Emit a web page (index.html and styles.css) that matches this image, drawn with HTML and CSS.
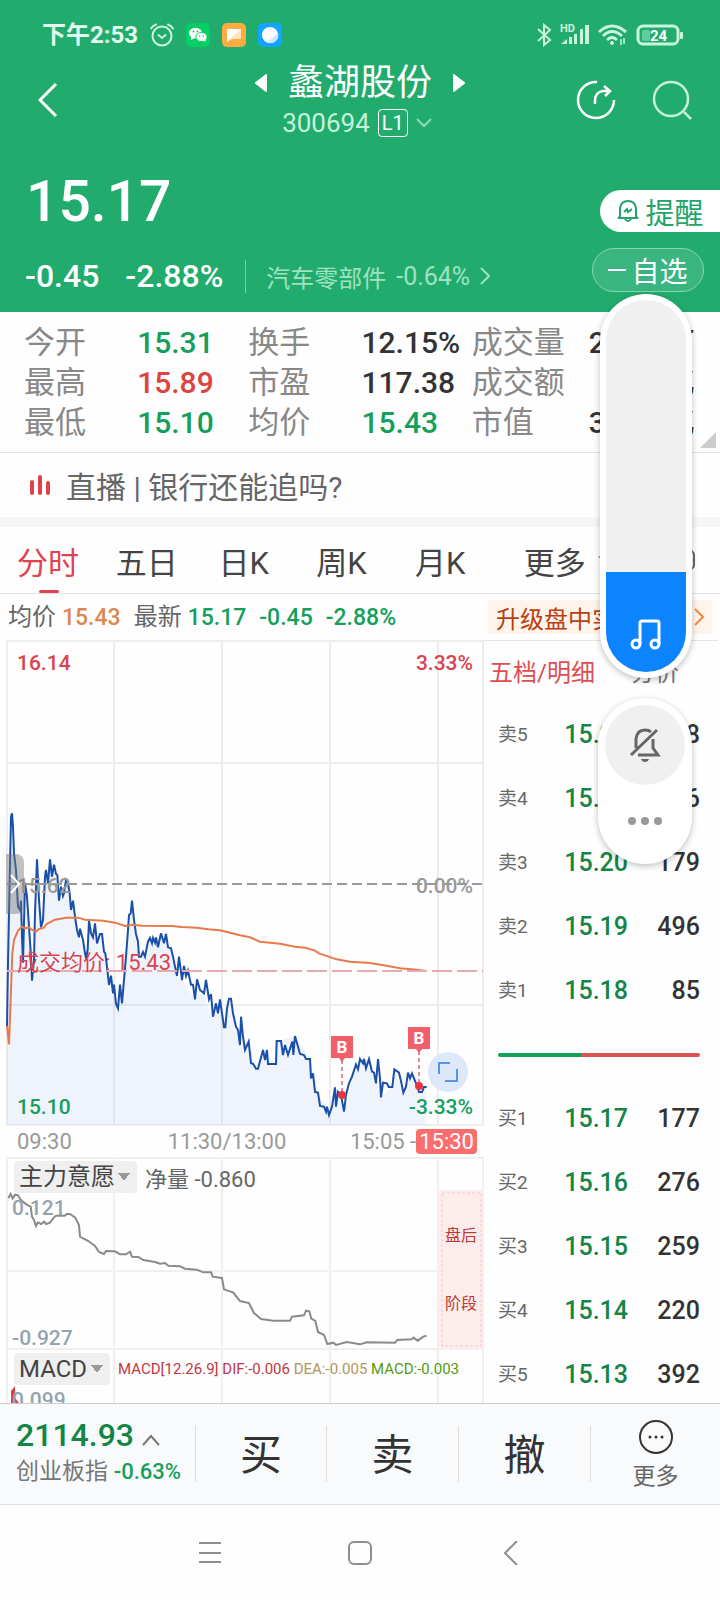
FILE: index.html
```html
<!DOCTYPE html>
<html lang="zh-CN">
<head>
    <meta charset="UTF-8">
    <meta name="viewport" content="width=device-width, initial-scale=1.0">
    <title>蠡湖股份 300694</title>
    <link rel="stylesheet" href="styles.css">
</head>
<body>
    <header class="top">
        <div class="status-bar">
            <span class="clock">下午2:53</span>
            <svg width="24" height="24" viewBox="0 0 24 24" fill="none" stroke="#c9f5dc" stroke-width="2" stroke-linecap="round">
                <circle cx="12" cy="13" r="9.500"/><path d="M8.500 12l3.500 3 3.500-3M1 5.500Q3 2.500 6 1.500M23 5.500Q21 2.500 18 1.500"/>
            </svg>
            <svg width="24" height="24" viewBox="0 0 24 24">
                <rect width="24" height="24" rx="5" fill="#04cf64"/>
                <ellipse cx="9.500" cy="10" rx="6.500" ry="5.300" fill="#fff"/><path d="M5 13v4l4-2z" fill="#fff"/>
                <ellipse cx="15.500" cy="14" rx="5.600" ry="4.600" fill="#fff" stroke="#04cf64"/><path d="M17 17l2.500 2v-3z" fill="#fff"/>
                <g fill="#04cf64"><circle cx="7.500" cy="8.500" r=".9"/><circle cx="11.500" cy="8.500" r=".9"/><circle cx="13.700" cy="13" r=".8"/><circle cx="17.300" cy="13" r=".8"/></g>
            </svg>
            <svg width="24" height="24" viewBox="0 0 24 24">
                <rect width="24" height="24" rx="5" fill="#ffab40"/>
                <path d="M5 6h14v10h-9l-5 3z" fill="#ffe3bd"/><path d="M5 6h14L5 19z" fill="#fff"/>
            </svg>
            <svg width="24" height="24" viewBox="0 0 24 24">
                <rect width="24" height="24" rx="5" fill="#13a5ff"/>
                <circle cx="12" cy="12" r="8" fill="#fff"/><path d="M20 10A8 8 0 0 1 9 19.500z" fill="#cde6ff"/>
            </svg>
            <div class="signals">
                <svg width="16" height="24" viewBox="0 0 16 24" fill="none" stroke="#c9f5dc" stroke-width="2"><path d="M2 6l12 11-6 5V2l6 5L2 18"/></svg>
                <svg width="30" height="24" viewBox="0 0 30 24" fill="#c9f5dc">
                    <text x="0" y="9" class="hd">HD</text>
                    <path d="M1 21l6-5v5zM9 14h3v7H9zM14 11h3v10h-3zM20 6h3v15h-3zM25 2h4v19h-4z"/>
                </svg>
                <svg width="30" height="24" viewBox="0 0 30 24" fill="none" stroke="#c9f5dc" stroke-width="3">
                    <path d="M1 9Q14-3 28 9M5 13Q14 4 24 13M9 17Q14 12 19 17"/><circle cx="14" cy="20" r="1.500" fill="#c9f5dc" stroke-width="1"/>
                    <path d="M23 16v6M26 15v6" stroke-width="1.500"/>
                </svg>
                <svg width="48" height="24" viewBox="0 0 48 24">
                    <rect x="2" y="3" width="40" height="18" rx="5" fill="none" stroke="#c9f5dc" stroke-width="3"/>
                    <rect x="6" y="7" width="8" height="11" rx="2" fill="#62cd97"/><rect x="44" y="9" width="3" height="7" rx="1" fill="#c9f5dc"/>
                    <text x="14" y="18" class="charge">24</text>
                </svg>
            </div>
        </div>

        <div class="nav">
            <button class="icon-btn" aria-label="返回">
                <svg width="20" height="34" viewBox="0 0 20 34" fill="none" stroke="#fff" stroke-width="3"><path d="M18 1L2 17l16 16"/></svg>
            </button>
            <div class="title">
                <div class="title-row">
                    <button class="icon-btn" aria-label="上一只"><svg width="12" height="18" viewBox="0 0 12 18"><path d="M11 0q1 0 1 1v16q0 1-1 1L0 9.500v-1z" fill="#fff"/></svg></button>
                    <h1>蠡湖股份</h1>
                    <button class="icon-btn" aria-label="下一只"><svg width="12" height="18" viewBox="0 0 12 18"><path d="M1 0Q0 0 0 1v16q0 1 1 1l11-8.500v-1z" fill="#fff"/></svg></button>
                </div>
                <div class="code-row">
                    <span>300694</span><span class="level">L1</span>
                    <svg width="16" height="10" viewBox="0 0 16 10" fill="none" stroke="#8cdcb3" stroke-width="2"><path d="M1 1l7 7 7-7"/></svg>
                </div>
            </div>
            <div class="nav-actions">
                <button class="icon-btn" aria-label="分享">
                    <svg width="40" height="40" viewBox="0 0 40 40" fill="none" stroke="#fff" stroke-width="2.500"><path d="M21 2A18 18 0 1 0 38 20M19 24v-3q0-9 8-10h7M28 6l6 5-5 5"/></svg>
                </button>
                <button class="icon-btn" aria-label="搜索">
                    <svg width="40" height="40" viewBox="0 0 40 40" fill="none" stroke="#c5f2da" stroke-width="2.500"><circle cx="19" cy="19" r="17"/><path d="M32 32l7 7"/></svg>
                </button>
            </div>
        </div>

        <div class="quote">
            <div>
                <div class="price">15.17</div>
                <div class="change">
                    <span>-0.45</span><span>-2.88%</span>
                    <a class="sector" href="#">汽车零部件 <span class="sector-pct">-0.64%</span>
                        <svg width="10" height="18" viewBox="0 0 10 18" fill="none" stroke="#a0e2c0" stroke-width="2"><path d="M1 1l8 8-8 8"/></svg>
                    </a>
                </div>
            </div>
            <div class="quote-actions">
                <button class="alert-btn">
                    <svg width="24" height="24" viewBox="0 0 24 24" fill="none" stroke="#21a56a" stroke-width="2"><path d="M4 18V9q1-7 8-7t8 7v9l2 1H2zM8 13l3-3 1 3 4-3M9 20q3 4 6 0"/></svg>提醒
                </button>
                <button class="watch-btn">
                    <svg width="18" height="4" viewBox="0 0 18 4"><path d="M0 2h18" stroke="#fff" stroke-width="2"/></svg>自选
                </button>
            </div>
        </div>
    </header>

    <dl class="stats">
        <dt>今开</dt><dd class="down">15.31</dd>
        <dt>换手</dt><dd>12.15%</dd>
        <dt>成交量</dt><dd class="wide"><span>2</span><span>万</span></dd>
        <dt>最高</dt><dd class="up">15.89</dd>
        <dt>市盈</dt><dd>117.38</dd>
        <dt>成交额</dt><dd class="wide"><span></span><span>亿</span></dd>
        <dt>最低</dt><dd class="down">15.10</dd>
        <dt>均价</dt><dd class="down">15.43</dd>
        <dt>市值</dt><dd class="wide"><span>3</span><span>亿</span></dd>
    </dl>

    <a class="live" href="#">
        <svg width="22" height="20" viewBox="0 0 22 20" fill="#e2414b"><rect x="0" y="5" width="4" height="15" rx="2"/><rect x="8" y="0" width="4" height="20" rx="2"/><rect x="16" y="6" width="4" height="14" rx="2"/></svg>
        直播 | 银行还能追吗?
    </a>

    <nav class="tabs">
        <button class="active">分时</button>
        <button>五日</button>
        <button>日K</button>
        <button>周K</button>
        <button>月K</button>
        <button>更多<svg width="12" height="8" viewBox="0 0 12 8"><path d="M0 0h12L6 8z" fill="#999"/></svg></button>
        <button class="settings" aria-label="设置"><svg width="20" height="20" viewBox="0 0 20 20"><rect x="1" y="1" width="18" height="18" rx="4" fill="none" stroke="#666" stroke-width="2"/></svg></button>
    </nav>

    <div class="summary">
        <div class="summary-values">
            <span>均价 <b class="avg">15.43</b></span>
            <span>最新 <b class="down">15.17</b></span>
            <b class="down">-0.45</b>
            <b class="down">-2.88%</b>
        </div>
        <a class="upgrade" href="#"><span>升级盘中实</span>
            <svg width="10" height="18" viewBox="0 0 10 18" fill="none" stroke="#f08a3c" stroke-width="2"><path d="M1 1l8 8-8 8"/></svg>
        </a>
    </div>

    <main class="market">
        <section class="charts">
            <div class="chart">
                <svg class="plot" viewBox="0 0 484 486">
                    <!-- grid -->
                    <g stroke="#ededee" stroke-width="2" fill="none">
                        <rect x="7" y="1" width="476" height="484"/>
                        <path d="M114 1v484M222 1v484M330 1v484M438 1v484M7 123h476M7 365h476"/>
                    </g>
                    <svg width="484" height="486" viewBox="0 30 1452 1458">
                        <path fill="#3f7ee8" fill-opacity=".08" d="M21 1485V1188L27 850 33 560 36 550 39 590 48 720 54 830 60 840 63 812 69 998 75 758 81 800 87 890 96 1052 102 990 111 688 123 892 129 870 138 720 144 760 150 688 172 735 177 812 198 750 209 790 231 900 258 985 267 872 291 940 306 912 327 1065 354 1135 378 980 396 812 417 980 435 980 450 924 498 912 531 1038 546 1050 585 1108 600 1080 639 1160 660 1108 676 1192 687 1106 720 1245 746 1235 768 1316 789 1260 828 1302 830 1233 885 1218 930 1287 954 1388 987 1455 1005 1372 1032 1445 1068 1303 1107 1287 1143 1402 1177 1371 1183 1318 1210 1388 1236 1330 1278 1371V1485z"/>
                        <polyline class="line price-line" points="21,1188 24,1000 27,850 33,560 36,550 39,590 42,670 48,720 54,830 60,840 63,812 66,920 69,998 75,758 81,800 87,890 93,980 96,1052 102,990 105,850 111,688 117,810 123,892 129,870 135,740 138,720 144,760 150,688 156,740 162,704 168,732 172,735 177,812 183,770 189,798 192,790 198,750 204,760 209,790 213,840 219,812 225,860 231,900 237,922 240,896 249,930 255,970 258,985 263,960 267,872 273,910 279,922 285,880 291,940 300,912 306,912 312,965 316,970 321,1010 327,1065 333,1037 339,1090 342,1064 348,1122 354,1135 360,1064 366,1120 372,1050 378,980 384,900 387,855 392,850 396,812 402,870 408,912 414,935 417,980 423,980 429,966 435,980 444,935 450,924 456,940 459,924 465,938 468,922 474,952 483,910 492,940 498,912 504,952 513,955 519,980 525,1010 531,1038 537,980 546,1050 552,1008 558,1038 564,1022 573,1064 579,1064 585,1108 591,1048 600,1080 612,1090 618,1050 627,1108 633,1092 639,1160 648,1120 654,1150 660,1108 666,1150 672,1192 676,1192 681,1135 687,1106 693,1106 699,1150 708,1190 714,1200 720,1245 723,1160 729,1220 735,1260 746,1235 753,1300 760,1302 768,1316 774,1316 789,1260 795,1290 801,1260 804,1302 828,1302 830,1233 843,1233 849,1275 855,1245 864,1275 877,1235 880,1275 885,1218 900,1272 912,1275 918,1287 930,1287 933,1345 939,1330 945,1386 954,1388 960,1428 972,1430 978,1445 981,1430 987,1455 996,1430 1005,1372 1008,1430 1014,1385 1023,1395 1032,1445 1038,1395 1047,1360 1056,1340 1068,1303 1074,1318 1080,1287 1089,1300 1092,1287 1098,1315 1107,1287 1116,1325 1122,1328 1128,1360 1134,1287 1140,1345 1143,1402 1149,1358 1161,1360 1166,1371 1177,1371 1183,1318 1197,1328 1204,1358 1210,1388 1218,1370 1224,1328 1230,1345 1236,1330 1242,1345 1250,1365 1257,1386 1266,1386 1272,1371 1280,1371"/>
                        <polyline class="line avg-line" points="21,1188 27,1243 33,1080 37,970 42,930 54,902 66,890 75,895 87,892 96,900 108,905 117,897 132,893 140,882 165,869 198,863 235,863 255,869 310,872 345,878 375,888 400,884 425,887 515,888 545,891 590,893 625,898 660,901 690,908 720,916 750,922 780,935 840,941 885,950 915,953 945,962 957,970 1010,988 1050,995 1110,999 1160,1007 1200,1015 1250,1019 1278,1023"/>
                    </svg>
                    <path d="M7 244h476" stroke="#999" stroke-width="2" stroke-dasharray="10 5"/>
                    <path d="M7 331h476" stroke="#e8aab0" stroke-width="2" stroke-dasharray="20 5"/>
                    <g class="axis-text">
                        <text x="17" y="30" fill="#d9434e">16.14</text>
                        <text x="473" y="30" fill="#d9434e" text-anchor="end">3.33%</text>
                        <text x="17" y="253" fill="#999">15.62</text>
                        <text x="473" y="253" fill="#999" text-anchor="end">0.00%</text>
                        <text x="17" y="330" fill="#d9434e" class="regular">成交均价: 15.43</text>
                        <text x="17" y="474" fill="#159f5c">15.10</text>
                        <text x="473" y="474" fill="#159f5c" text-anchor="end">-3.33%</text>
                    </g>
                    <!-- buy markers -->
                    <g>
                        <path d="M342 420v32M419 411v32" stroke="#dd8b96" stroke-width="2" stroke-dasharray="4 3"/>
                        <path d="M331 396h22v22h-8l-3 4-3-4h-8zM408 387h22v22h-8l-3 4-3-4h-8z" fill="#f15f6b"/>
                        <circle cx="342" cy="455" r="4" fill="#e8363f"/><circle cx="419" cy="446" r="4" fill="#e8363f"/>
                        <text class="mark" x="342" y="413">B</text><text class="mark" x="419" y="404">B</text>
                    </g>
                </svg>
                <button class="drawer" aria-label="展开"><svg width="10" height="20" viewBox="0 0 10 20" fill="none" stroke="#fff" stroke-width="2"><path d="M1 1l8 9-8 9"/></svg></button>
                <button class="expand" aria-label="全屏"><svg width="20" height="20" viewBox="0 0 20 20" fill="none" stroke="#5b93e0" stroke-width="2"><path d="M1 12V1h11M19 7v12H7"/></svg></button>
            </div>

            <div class="times">
                <span>09:30</span>
                <span>11:30/13:00</span>
                <span>15:05 -<mark>15:30</mark></span>
            </div>

            <div class="indicators">
                <svg class="plot" viewBox="0 0 484 246">
                    <path d="M6 1h478M7 0v246M114 0v246M222 0v246M330 0v246M438 0v246M483 0v246M6 114h432M6 192h478" stroke="#f0f0f1" stroke-width="2"/>
                    <rect x="438" y="33" width="46" height="159" fill="#fdecec"/>
                    <rect x="442" y="36" width="39" height="153" fill="none" stroke="#f6c9c9" stroke-dasharray="3 2"/>
                    <text class="phase" x="461" y="84">盘后</text><text class="phase" x="461" y="152">阶段</text>
                    <svg width="484" height="246" viewBox="0 111 1452 738">
                        <polyline class="line flow-line" points="25,235 32,222 38,235 45,224 54,226 60,237 72,248 84,256 92,260 96,290 102,300 108,318 114,307 123,312 132,305 138,312 150,308 162,292 168,287 194,287 200,282 210,282 226,293 237,316 240,350 265,363 285,378 297,396 312,402 318,393 345,394 360,403 378,403 390,395 396,410 415,411 430,420 465,426 480,431 495,429 505,437 540,439 555,446 590,449 610,457 633,457 638,470 666,474 672,508 700,518 720,543 747,549 762,579 783,597 820,602 870,602 876,590 912,586 918,572 928,574 934,596 946,603 954,636 972,645 982,672 1000,668 1008,675 1040,666 1080,673 1100,667 1185,668 1192,660 1235,658 1240,653 1253,662 1270,650 1280,647"/>
                    </svg>
                    <path d="M11 246v-12l4-5v12l4 5z" fill="#d9434e"/>
                    <g class="axis-text" fill="#93a4b1">
                        <text x="12" y="58">0.121</text>
                        <text x="12" y="188">-0.927</text>
                        <text x="12" y="250">0.099</text>
                    </g>
                </svg>
                <div class="indicator-head flow">
                    <select aria-label="指标一"><option>主力意愿</option></select>
                    <span>净量 <b>-0.860</b></span>
                </div>
                <div class="indicator-head macd">
                    <select aria-label="指标二"><option>MACD</option></select>
                    <p><span class="m1">MACD[12.26.9]</span> <span class="m1">DIF:-0.006</span> <span class="m2">DEA:-0.005</span> <span class="m3">MACD:-0.003</span></p>
                </div>
            </div>
        </section>

        <section class="book">
            <div class="book-tabs">
                <button class="active">五档/明细</button>
                <button>分价</button>
            </div>
            <table>
                <tbody>
                    <tr><th scope="row">卖5</th><td class="p">15.22</td><td>8</td></tr>
                    <tr><th scope="row">卖4</th><td class="p">15.21</td><td>6</td></tr>
                    <tr><th scope="row">卖3</th><td class="p">15.20</td><td>179</td></tr>
                    <tr><th scope="row">卖2</th><td class="p">15.19</td><td>496</td></tr>
                    <tr><th scope="row">卖1</th><td class="p">15.18</td><td>85</td></tr>
                    <tr><td colspan="3"><div class="ratio"></div></td></tr>
                    <tr><th scope="row">买1</th><td class="p">15.17</td><td>177</td></tr>
                    <tr><th scope="row">买2</th><td class="p">15.16</td><td>276</td></tr>
                    <tr><th scope="row">买3</th><td class="p">15.15</td><td>259</td></tr>
                    <tr><th scope="row">买4</th><td class="p">15.14</td><td>220</td></tr>
                    <tr><th scope="row">买5</th><td class="p">15.13</td><td>392</td></tr>
                </tbody>
            </table>
        </section>
    </main>

    <footer class="trade-bar">
        <a class="index" href="#">
            <span class="index-value">2114.93 <svg width="18" height="12" viewBox="0 0 18 12" fill="none" stroke="#777" stroke-width="2"><path d="M1 11l8-9 8 9"/></svg></span>
            <span class="index-name">创业板指 <b>-0.63%</b></span>
        </a>
        <button>买</button>
        <button>卖</button>
        <button>撤</button>
        <button class="more">
            <svg width="36" height="36" viewBox="0 0 36 36"><circle cx="18" cy="18" r="16" fill="none" stroke="#333" stroke-width="2"/><g fill="#333"><circle cx="12" cy="18" r="1.500"/><circle cx="18" cy="18" r="1.500"/><circle cx="24" cy="18" r="1.500"/></g></svg>
            更多
        </button>
    </footer>

    <div class="system-nav">
        <button class="icon-btn" aria-label="菜单"><svg width="24" height="24" viewBox="0 0 24 24" stroke="#8f8f8f" stroke-width="2"><path d="M1 2h22M1 12h22M1 21h22"/></svg></button>
        <button class="icon-btn" aria-label="主页"><svg width="24" height="24" viewBox="0 0 24 24"><rect x="1" y="1" width="22" height="22" rx="5" fill="none" stroke="#8f8f8f" stroke-width="2"/></svg></button>
        <button class="icon-btn" aria-label="后退"><svg width="24" height="24" viewBox="0 0 24 24" fill="none" stroke="#8f8f8f" stroke-width="2"><path d="M19 0L7 12l12 12"/></svg></button>
    </div>

    <!-- system volume overlay -->
    <div class="volume">
        <div class="volume-track">
            <input type="range" min="0" max="100" value="27" aria-label="音量">
            <svg width="32" height="32" viewBox="0 0 32 32" fill="none" stroke="#fff" stroke-width="3"><circle cx="6" cy="26" r="4"/><circle cx="25" cy="26" r="4"/><path d="M10 26V5q0-2 2-2h15q2 0 2 2v21"/></svg>
        </div>
        <div class="volume-menu">
            <button class="mute" aria-label="静音">
                <svg width="32" height="36" viewBox="0 0 32 36" fill="none" stroke="#666" stroke-width="3"><path d="M7 21V12Q8 3 16 3q4 0 6 2M24 12v9l5 7H9M2 28L28 3"/><path d="M12 32h8q-1 3-4 3t-4-3z" fill="#666" stroke="none"/></svg>
            </button>
            <button class="icon-btn" aria-label="更多音量选项"><svg width="34" height="8" viewBox="0 0 34 8" fill="#999"><circle cx="4" cy="4" r="4"/><circle cx="17" cy="4" r="4"/><circle cx="30" cy="4" r="4"/></svg></button>
        </div>
    </div>
</body>
</html>
```

FILE: styles.css
```css
* {
    box-sizing: border-box;
}

body {
    margin: 0;
    position: relative;
    display: flex;
    flex-direction: column;
    min-height: 100vh;
    font-family: Roboto, "Noto Sans CJK SC", sans-serif;
    background: #fefefe;
    color: #333;
    white-space: nowrap;
}

button,
select {
    font: inherit;
    color: inherit;
    background: none;
    border: none;
    padding: 0;
    cursor: pointer;
}

a {
    color: inherit;
    text-decoration: none;
}

b {
    font-weight: 500;
}

svg {
    flex: none;
}

.icon-btn {
    display: flex;
}

.up {
    color: #dd4340;
}

.down {
    color: #159f5c;
}

/* Green header */
.top {
    background: #21ac6e;
    color: #fff;
}

.status-bar {
    display: flex;
    align-items: center;
    gap: 12px;
    height: 62px;
    padding: 8px 36px 0 42px;
}

.clock {
    font-size: 24px;
    line-height: 28px;
    font-weight: 700;
    color: #e2fbee;
}

.signals {
    display: flex;
    gap: 8px;
    margin-left: auto;
}

.hd {
    font-size: 11px;
    font-weight: 700;
}

.charge {
    font-size: 15px;
    font-weight: 700;
    fill: #fff;
}

.nav {
    display: grid;
    grid-template-columns: 1fr auto 1fr;
    align-items: center;
    height: 78px;
    padding: 0 28px;
}

.nav > .icon-btn {
    padding: 0 0 4px 10px;
}

.title-row,
.code-row {
    display: flex;
    align-items: center;
    justify-content: center;
}

.title-row {
    gap: 21px;
    height: 42px;
}

h1 {
    margin: 0;
    font-size: 36px;
    line-height: 42px;
    font-weight: 400;
}

.code-row {
    gap: 8px;
    height: 38px;
    padding-right: 6px;
    font-size: 26px;
    color: #c5f2da;
}

.level {
    border: 1px solid #fff;
    border-radius: 4px;
    padding: 0 3px;
    font-size: 20px;
    line-height: 26px;
    color: #fff;
}

.nav-actions {
    display: flex;
    justify-content: flex-end;
    gap: 36px;
    padding-bottom: 4px;
}

.quote {
    display: flex;
    justify-content: space-between;
    height: 172px;
}

.price {
    padding: 26px 0 0 26px;
    font-size: 57px;
    line-height: 72px;
    font-weight: 500;
}

.change {
    display: flex;
    align-items: center;
    gap: 26px;
    height: 34px;
    margin-top: 21px;
    padding-left: 25px;
    font-size: 32px;
    font-weight: 500;
}

.sector {
    display: flex;
    align-items: center;
    gap: 10px;
    height: 33px;
    margin-left: -4px;
    padding-left: 20px;
    border-left: 1px solid #7acda6;
    font-size: 24px;
    font-weight: 400;
    color: #a0e2c0;
}

.sector-pct {
    font-size: 25px;
}

.quote-actions {
    display: flex;
    flex-direction: column;
    align-items: flex-end;
    gap: 16px;
    padding-top: 50px;
}

.alert-btn,
.watch-btn {
    display: flex;
    align-items: center;
    justify-content: center;
    font-size: 29px;
}

.alert-btn {
    gap: 5px;
    width: 120px;
    height: 42px;
    border-radius: 21px 0 0 21px;
    background: #fff;
    color: #21a56a;
}

.watch-btn {
    gap: 5px;
    width: 112px;
    height: 44px;
    margin-right: 16px;
    border: 1px solid #8ad5b0;
    border-radius: 22px;
    background: #39b57f;
    font-size: 28px;
}

/* Key figures */
.stats {
    position: relative;
    display: grid;
    grid-template-columns: 113fr 111fr 113fr 110fr 117fr 106fr;
    margin: 0;
    padding: 11px 25px 9px 24px;
    border-bottom: 1px solid #e4e4e4;
    font-size: 31px;
    line-height: 40px;
}

.stats::after {
    content: "";
    position: absolute;
    right: 4px;
    bottom: 4px;
    border: 8px solid #ccc;
    border-top-color: transparent;
    border-left-color: transparent;
}

.stats dt {
    color: #888;
}

.stats dd {
    margin: 0;
    font-size: 30px;
    font-weight: 500;
}

.stats .wide {
    display: flex;
    justify-content: space-between;
}

.live {
    display: flex;
    align-items: center;
    gap: 14px;
    height: 74px;
    padding-left: 30px;
    border-bottom: 10px solid #f6f6f7;
    font-size: 30px;
    color: #666;
}

.tabs {
    display: grid;
    grid-template-columns: 98fr 102fr 97fr 98fr 108fr 120fr 50fr;
    height: 67px;
    padding: 0 25px 0 17px;
    border-bottom: 1px solid #e4e4e4;
    font-size: 31px;
    color: #444;
}

.tabs button {
    display: flex;
    align-items: center;
    gap: 12px;
    position: relative;
}

.tabs .active {
    color: #e0434d;
}

.tabs .active::after {
    content: "";
    position: absolute;
    left: 22px;
    bottom: 0;
    width: 20px;
    height: 3px;
    border-radius: 2px;
    background: #e0434d;
}

.tabs .settings {
    justify-content: flex-end;
}

/* Latest quote line */
.summary {
    display: grid;
    grid-template-columns: 488fr 232fr;
    align-items: center;
    height: 46px;
    font-size: 24px;
    color: #666;
}

.summary-values {
    display: flex;
    align-items: baseline;
    gap: 13px;
    padding-left: 8px;
    line-height: 34px;
}

.summary-values b {
    font-size: 23px;
}

.avg {
    color: #db8753;
}

.upgrade {
    display: flex;
    align-items: center;
    justify-content: space-between;
    height: 34px;
    margin-right: 8px;
    padding: 0 8px;
    border-radius: 4px;
    background: #fff4ec;
    color: #b8400f;
}

/* Charts and order book */
.market {
    display: grid;
    grid-template-columns: 484fr 236fr;
}

.chart,
.indicators {
    position: relative;
}

.plot {
    display: block;
    width: 100%;
    overflow: hidden;
}

.line {
    fill: none;
    stroke-width: 2;
    vector-effect: non-scaling-stroke;
}

.price-line {
    stroke: #1b50a8;
}

.avg-line {
    stroke: #e8794a;
}

.flow-line {
    stroke: #8a8a8a;
}

.axis-text {
    font-size: 21px;
    font-weight: 500;
}

.regular {
    font-size: 22px;
    font-weight: 400;
}

.mark {
    font-size: 17px;
    font-weight: 700;
    fill: #fff;
    text-anchor: middle;
}

.phase {
    font-size: 16px;
    fill: #c0392f;
    text-anchor: middle;
}

.drawer,
.expand {
    position: absolute;
    display: flex;
    align-items: center;
    justify-content: center;
}

.drawer {
    left: 6px;
    top: 44%;
    width: 18px;
    height: 60px;
    border-radius: 0 8px 8px 0;
    background: rgba(120, 120, 120, 0.45);
}

.expand {
    right: 16px;
    bottom: 34px;
    width: 40px;
    height: 40px;
    border-radius: 50%;
    background: #dde8fb;
}

.times {
    display: grid;
    grid-template-columns: 1fr auto 1fr;
    align-items: center;
    height: 31px;
    padding: 0 7px 0 17px;
    font-size: 22px;
    color: #999;
}

.times :last-child {
    justify-self: end;
}

.times span:nth-child(2) {
    padding-right: 40px;
}

.times mark {
    padding: 0 3px;
    border-radius: 4px;
    background: #fc6d6d;
    color: #fff;
}

.indicator-head {
    position: absolute;
    left: 14px;
    display: flex;
    align-items: center;
    gap: 8px;
    height: 32px;
    font-size: 22px;
    color: #666;
}

.indicator-head b {
    font-weight: 400;
}

.flow {
    top: 4px;
}

.macd {
    top: 196px;
}

.indicator-head select {
    appearance: none;
    height: 32px;
    padding: 0 22px 0 5px;
    border-radius: 4px;
    background: conic-gradient(from -37deg at 50% 100%, #999 74deg, transparent 0) no-repeat right 7px center / 12px 8px #efefef;
    font-size: 24px;
    color: #444;
}

.indicator-head p {
    margin: 0;
    font-size: 15px;
}

.m1 {
    color: #c0383f;
}

.m2 {
    color: #b3945e;
}

.m3 {
    color: #549a12;
}

.book {
    margin-bottom: -4px;
}

.book-tabs {
    display: flex;
    align-items: center;
    gap: 36px;
    height: 63px;
    margin-right: 2px;
    padding: 0 0 3px 5px;
    border-top: 1px solid #e4e4e4;
    font-size: 24px;
    color: #777;
}

.book-tabs .active {
    color: #de4d52;
}

.book table {
    width: 100%;
    border-collapse: collapse;
    table-layout: fixed;
}

.book tr {
    height: 64px;
}

.book th {
    width: 34%;
    padding: 0 0 0 14px;
    text-align: left;
    font-size: 19px;
    line-height: 24px;
    font-weight: 400;
    color: #666;
}

.book td {
    padding: 0 20px 0 0;
    text-align: right;
    font-size: 25px;
    line-height: 30px;
    font-weight: 500;
}

.book .p {
    padding: 0;
    text-align: left;
    color: #138544;
}

.ratio {
    height: 4px;
    margin-left: 14px;
    border-radius: 2px;
    background: linear-gradient(to right, #159f5c 41%, #dd5353 41%);
}

/* Bottom trading bar */
.trade-bar {
    position: relative;
    display: grid;
    grid-template-columns: 195fr 131fr 132fr 132fr 130fr;
    align-items: center;
    height: 102px;
    border-top: 1px solid #ccc;
    border-bottom: 1px solid #e2e2e2;
    background: #f9fafc;
}

.trade-bar button {
    height: 56px;
    padding-top: 2px;
    border-left: 1px solid #ddd;
    font-size: 42px;
    line-height: 56px;
}

.index {
    display: flex;
    flex-direction: column;
    padding-left: 16px;
}

.index-value {
    font-size: 32px;
    line-height: 36px;
    font-weight: 500;
    color: #138544;
}

.index-name {
    font-size: 23px;
    line-height: 38px;
    color: #777;
}

.index-name b {
    font-size: 22px;
    color: #159f5c;
}

.trade-bar .more {
    display: flex;
    flex-direction: column;
    align-items: center;
    justify-content: center;
    gap: 4px;
    padding-top: 6px;
    font-size: 23px;
    line-height: 36px;
    color: #666;
}

.system-nav {
    flex: 1;
    display: flex;
    align-items: center;
    justify-content: center;
    gap: 126px;
    min-height: 95px;
}

/* Volume overlay */
.volume {
    position: absolute;
    top: 294px;
    right: 28px;
    display: flex;
    flex-direction: column;
    align-items: flex-end;
    gap: 20px;
}

.volume-track,
.volume-menu {
    border-radius: 47px;
    background: #fff;
    box-shadow: 0 2px 6px rgba(0, 0, 0, 0.25);
}

.volume-track {
    position: relative;
    padding: 6px;
}

.volume-track input {
    appearance: none;
    display: block;
    width: 80px;
    height: 372px;
    margin: 0;
    border-radius: 40px;
    writing-mode: vertical-lr;
    direction: rtl;
    background: linear-gradient(to top, #0c83ff 27%, #f0f0f0 27%);
}

.volume-track input::-webkit-slider-thumb {
    appearance: none;
    width: 80px;
    height: 1px;
}

.volume-track svg {
    position: absolute;
    left: 30px;
    bottom: 28px;
    pointer-events: none;
}

.volume-menu {
    display: flex;
    flex-direction: column;
    align-items: center;
    gap: 32px;
    width: 94px;
    padding: 7px 0 39px;
}

.mute {
    display: flex;
    align-items: center;
    justify-content: center;
    width: 80px;
    height: 80px;
    border-radius: 50%;
    background: #f0f0f0;
}
```
